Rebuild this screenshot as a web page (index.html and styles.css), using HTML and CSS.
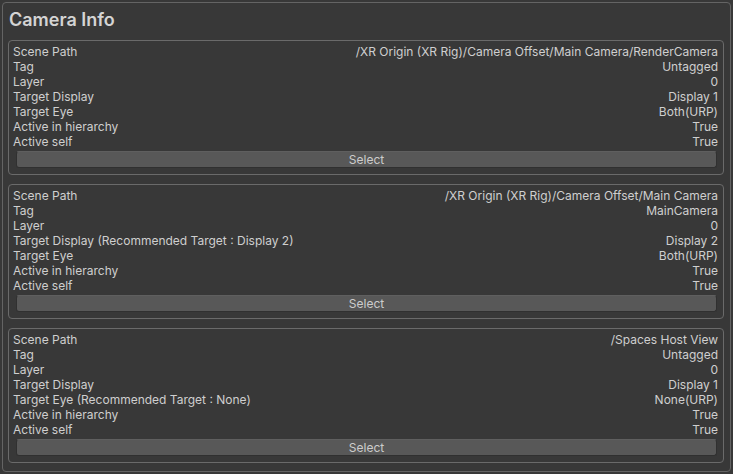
FILE: index.html
```html
<!DOCTYPE html>
<html lang="en">
<head>
    <meta charset="UTF-8">
    <title>Camera Info</title>
    <link rel="stylesheet" href="styles.css">
</head>
<body>
    <div class="panel">
        <h1 class="title">Camera Info</h1>

        <!-- Camera 1 -->
        <div class="card">
            <div class="row"><span>Scene Path</span><span>/XR Origin (XR Rig)/Camera Offset/Main Camera/RenderCamera</span></div>
            <div class="row"><span>Tag</span><span>Untagged</span></div>
            <div class="row"><span>Layer</span><span>0</span></div>
            <div class="row"><span>Target Display</span><span>Display 1</span></div>
            <div class="row"><span>Target Eye</span><span>Both(URP)</span></div>
            <div class="row"><span>Active in hierarchy</span><span>True</span></div>
            <div class="row"><span>Active self</span><span>True</span></div>
            <button class="select-btn">Select</button>
        </div>

        <!-- Camera 2 -->
        <div class="card">
            <div class="row"><span>Scene Path</span><span>/XR Origin (XR Rig)/Camera Offset/Main Camera</span></div>
            <div class="row"><span>Tag</span><span>MainCamera</span></div>
            <div class="row"><span>Layer</span><span>0</span></div>
            <div class="row"><span>Target Display (Recommended Target : Display 2)</span><span>Display 2</span></div>
            <div class="row"><span>Target Eye</span><span>Both(URP)</span></div>
            <div class="row"><span>Active in hierarchy</span><span>True</span></div>
            <div class="row"><span>Active self</span><span>True</span></div>
            <button class="select-btn">Select</button>
        </div>

        <!-- Camera 3 -->
        <div class="card">
            <div class="row"><span>Scene Path</span><span>/Spaces Host View</span></div>
            <div class="row"><span>Tag</span><span>Untagged</span></div>
            <div class="row"><span>Layer</span><span>0</span></div>
            <div class="row"><span>Target Display</span><span>Display 1</span></div>
            <div class="row"><span>Target Eye (Recommended Target : None)</span><span>None(URP)</span></div>
            <div class="row"><span>Active in hierarchy</span><span>True</span></div>
            <div class="row"><span>Active self</span><span>True</span></div>
            <button class="select-btn">Select</button>
        </div>
    </div>
</body>
</html>
```

FILE: styles.css
```css
body {
    margin: 0;
    padding: 2px;
    background-color: #383838;
    font-family: Inter, "Noto Sans", sans-serif;
    color: #cfcfcf;
}
.panel {
    border: 1px solid #646464;
    border-radius: 4px;
    padding: 0 6px 0 5px;
    height: 470px;
    box-sizing: border-box;
}
.title {
    margin: 0;
    padding: 6px 0 0 1px;
    height: 37px;
    box-sizing: border-box;
    font-size: 18px;
    font-weight: 600;
    color: #d4d4d4;
}
.card {
    border: 1px solid #6a6a6a;
    border-radius: 4px;
    padding: 3px 5px 5px 4px;
    margin-bottom: 9px;
    height: 135px;
    box-sizing: border-box;
}
.row {
    display: flex;
    justify-content: space-between;
    font-size: 12px;
    line-height: 15px;
    height: 15px;
}
.select-btn {
    display: block;
    width: calc(100% - 4px);
    margin: 2px 0 0 3px;
    height: 17px;
    padding: 0;
    background-color: #585858;
    border: 1px solid #303030;
    border-top-color: #5f5f5f;
    border-radius: 3px;
    color: #cccccc;
    font-family: Inter, "Noto Sans", sans-serif;
    font-size: 12px;
    line-height: 15px;
}
```
